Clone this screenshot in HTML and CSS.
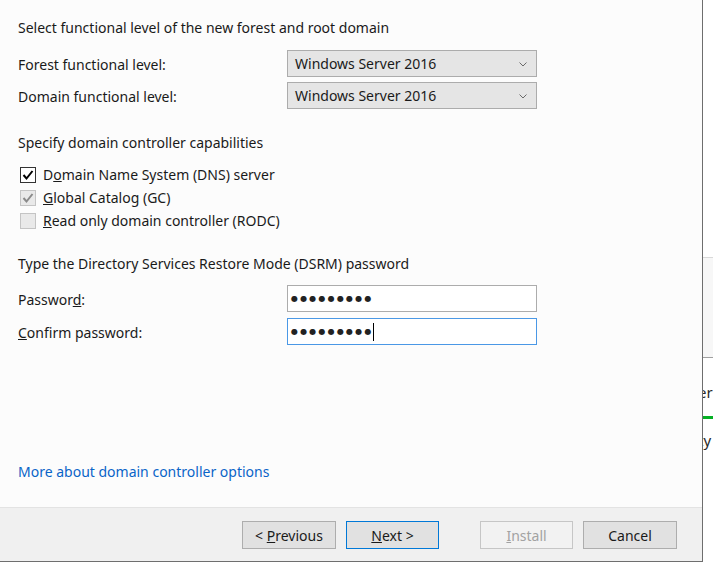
FILE: index.html
```html
<!DOCTYPE html>
<html lang="en">
<head>
    <meta charset="UTF-8">
    <title>Domain Controller Options</title>
    <link rel="stylesheet" href="styles.css">
</head>
<body>
    <div class="screen">
        <div class="dialog">
            <div class="content">
                <p class="section">Select functional level of the new forest and root domain</p>

                <div class="form-grid levels">
                    <label>Forest functional level:</label>
                    <div class="select">
                        <span>Windows Server 2016</span>
                        <svg class="chevron" viewBox="0 0 8 5"><path d="M0.5 0.5 L4 4 L7.5 0.5" /></svg>
                    </div>
                    <label>Domain functional level:</label>
                    <div class="select">
                        <span>Windows Server 2016</span>
                        <svg class="chevron" viewBox="0 0 8 5"><path d="M0.5 0.5 L4 4 L7.5 0.5" /></svg>
                    </div>
                </div>

                <p class="section caps">Specify domain controller capabilities</p>

                <ul class="checks">
                    <li>
                        <span class="box checked">
                            <svg viewBox="0 0 14 14"><path d="M2.5 7 L5.5 10.5 L11.5 3" /></svg>
                        </span>
                        <span>D<u>o</u>main Name System (DNS) server</span>
                    </li>
                    <li>
                        <span class="box checked disabled">
                            <svg viewBox="0 0 14 14"><path d="M2.5 7 L5.5 10.5 L11.5 3" /></svg>
                        </span>
                        <span><u>G</u>lobal Catalog (GC)</span>
                    </li>
                    <li>
                        <span class="box disabled"></span>
                        <span><u>R</u>ead only domain controller (RODC)</span>
                    </li>
                </ul>

                <p class="section dsrm">Type the Directory Services Restore Mode (DSRM) password</p>

                <div class="form-grid passwords">
                    <label>Passwor<u>d</u>:</label>
                    <div class="field">
                        <span class="dots">●●●●●●●●●</span>
                    </div>
                    <label><u>C</u>onfirm password:</label>
                    <div class="field focused">
                        <span class="dots">●●●●●●●●●</span>
                        <span class="caret"></span>
                    </div>
                </div>

                <a class="more-link" href="#">More about domain controller options</a>
            </div>

            <div class="footer">
                <button class="btn">&lt; <u>P</u>revious</button>
                <button class="btn default"><u>N</u>ext &gt;</button>
                <button class="btn install" disabled><u>I</u>nstall</button>
                <button class="btn">Cancel</button>
            </div>
        </div>

        <!-- window behind the dialog, only a sliver is visible -->
        <div class="behind">
            <div class="behind-top"></div>
            <div class="behind-band"></div>
            <div class="behind-text first">er</div>
            <div class="behind-bar"></div>
            <div class="behind-text">ty</div>
        </div>
    </div>
</body>
</html>
```

FILE: styles.css
```css
:root {
    --text: #1a1a1a;
    --dialog-bg: #fcfcfc;
    --footer-bg: #f0f0f0;
    --frame: #6e6e6e;
    --control-border: #adadad;
    --button-bg: #e1e1e1;
    --accent: #0078d7;
    --link: #0a64c8;
}

body {
    margin: 0;
    font-family: 'Noto Sans', 'Open Sans', sans-serif;
    font-size: 14px;
    color: var(--text);
    background: #ffffff;
}

.screen {
    display: flex;
    width: 713px;
    height: 562px;
    overflow: hidden;
}

.dialog {
    width: 702px;
    flex: none;
    border-right: 1px solid var(--frame);
    display: flex;
    flex-direction: column;
}

.content {
    flex: 1;
    background: var(--dialog-bg);
    padding: 18px 0 25px 18px;
    display: flex;
    flex-direction: column;
    line-height: 20px;
}

.section {
    margin: 0;
}

.form-grid {
    display: grid;
    grid-template-columns: 269px 250px;
    align-items: center;
}

.levels {
    margin-top: 12px;
    row-gap: 5px;
}

.passwords {
    margin-top: 11px;
    row-gap: 6px;
}

.form-grid label {
    padding-top: 2px;
}

.select {
    height: 27px;
    box-sizing: border-box;
    background: #e5e5e5;
    border: 1px solid #acacac;
    display: flex;
    align-items: center;
    justify-content: space-between;
    padding: 1px 9px 0 7px;
}

.chevron {
    width: 8px;
    height: 5px;
    fill: none;
    stroke: #6a6a6a;
    stroke-width: 1;
}

.caps {
    margin-top: 24px;
}

.checks {
    list-style: none;
    margin: 10px 0 0 0;
    padding: 0;
}

.checks li {
    height: 23px;
    display: flex;
    align-items: center;
    gap: 7px;
}

.box {
    width: 16px;
    height: 16px;
    box-sizing: border-box;
    margin-left: 2px;
    border: 1px solid #333333;
    background: #ffffff;
    display: flex;
    align-items: center;
    justify-content: center;
}

.box svg {
    width: 14px;
    height: 14px;
    fill: none;
    stroke: #000000;
    stroke-width: 2;
}

.box.disabled {
    border-color: #c4c4c4;
    background: #e9e9e9;
}

.box.disabled svg {
    stroke: #8a8a8a;
}

.dsrm {
    margin-top: 22px;
}

.field {
    height: 27px;
    box-sizing: border-box;
    background: #ffffff;
    border: 1px solid #acacac;
    display: flex;
    align-items: center;
    padding-left: 3px;
}

.field.focused {
    border-color: #4a98e6;
}

.dots {
    font-family: 'DejaVu Sans', sans-serif;
    font-size: 8px;
    letter-spacing: 2.2px;
    color: #222222;
}

.caret {
    width: 1px;
    height: 18px;
    background: #000000;
    margin-left: -1px;
}

.more-link {
    margin-top: auto;
    color: var(--link);
    text-decoration: none;
    align-self: flex-start;
}

.footer {
    height: 55px;
    box-sizing: border-box;
    background: var(--footer-bg);
    border-top: 1px solid #e3e3e3;
    border-bottom: 1px solid var(--frame);
    display: flex;
    justify-content: flex-end;
    align-items: flex-start;
    padding: 13px 25px 0 0;
    gap: 10px;
}

.btn {
    width: 94px;
    height: 28px;
    background: var(--button-bg);
    border: 1px solid var(--control-border);
    font-family: inherit;
    font-size: 14px;
    color: var(--text);
    padding: 0;
}

.btn.default {
    width: 93px;
    border-color: var(--accent);
}

.btn.install {
    width: 93px;
    margin-left: 31px;
    background: #f2f2f2;
    border-color: #c6c6c6;
    color: #a2a2a2;
}

.behind {
    flex: 1;
    overflow: hidden;
    background: #ffffff;
}

.behind-top {
    height: 257px;
}

.behind-band {
    height: 99px;
    background: #f7f7f7;
    border-top: 1px solid #d9d9d9;
    border-bottom: 1px solid #a0a0a0;
}

.behind-text {
    font-size: 15px;
    line-height: 20px;
    margin-left: -5px;
    white-space: nowrap;
    color: #2a2a2a;
}

.behind-text.first {
    margin-top: 24px;
}

.behind-bar {
    height: 3px;
    background: #06b025;
    margin: 14px 0 11px 0;
}
```
